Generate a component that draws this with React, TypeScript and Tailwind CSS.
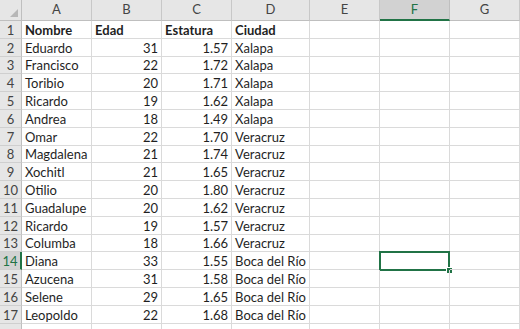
import React from 'react';

const columns = ['A', 'B', 'C', 'D', 'E', 'F', 'G'];

// [nombre, edad, estatura, ciudad]
const rows: [string, string, string, string][] = [
  ['Nombre', 'Edad', 'Estatura', 'Ciudad'],
  ['Eduardo', '31', '1.57', 'Xalapa'],
  ['Francisco', '22', '1.72', 'Xalapa'],
  ['Toribio', '20', '1.71', 'Xalapa'],
  ['Ricardo', '19', '1.62', 'Xalapa'],
  ['Andrea', '18', '1.49', 'Xalapa'],
  ['Omar', '22', '1.70', 'Veracruz'],
  ['Magdalena', '21', '1.74', 'Veracruz'],
  ['Xochitl', '21', '1.65', 'Veracruz'],
  ['Otilio', '20', '1.80', 'Veracruz'],
  ['Guadalupe', '20', '1.62', 'Veracruz'],
  ['Ricardo', '19', '1.57', 'Veracruz'],
  ['Columba', '18', '1.66', 'Veracruz'],
  ['Diana', '33', '1.55', 'Boca del Río'],
  ['Azucena', '31', '1.58', 'Boca del Río'],
  ['Selene', '29', '1.65', 'Boca del Río'],
  ['Leopoldo', '22', '1.68', 'Boca del Río'],
  ['', '', '', ''],
];

const SELECTED_COL = 5; // F
const SELECTED_ROW = 14;
const VISIBLE_ROWS = 17; // row 18 only peeks in at the bottom edge

export default function App() {
  return (
    <div
      className="w-[520px] h-[329px] overflow-hidden bg-white text-[13px] text-[#1f1f1f]"
      style={{ fontFamily: 'Lato, "Liberation Sans", sans-serif' }}
    >
      <div className="grid grid-cols-[22px_repeat(7,1fr)] grid-rows-[21px_repeat(18,17.8px)]">
        {/* Corner */}
        <div className="relative bg-[#e6e6e6] border-r border-b border-[#bfbfbf]">
          <svg className="absolute right-[3px] bottom-[3px]" width="8" height="8" viewBox="0 0 8 8">
            <polygon points="8,0 8,8 0,8" fill="#b7b7b7" />
          </svg>
        </div>

        {/* Column headers */}
        {columns.map((c, i) =>
          i === SELECTED_COL ? (
            <div
              key={c}
              className="flex items-center justify-center bg-[#d2d2d2] border-r border-[#bfbfbf] border-b-2 border-b-[#217346] text-[#217346]"
            >
              {c}
            </div>
          ) : (
            <div
              key={c}
              className="flex items-center justify-center bg-[#e6e6e6] border-r border-b border-[#c8c8c8] border-b-[#bfbfbf] text-[#444]"
            >
              {c}
            </div>
          )
        )}

        {/* Body */}
        {rows.map((r, ri) => {
          const n = ri + 1;
          const bold = ri === 0;
          const selRow = n === SELECTED_ROW;
          return (
            <React.Fragment key={n}>
              <div
                className={`flex items-end justify-center pb-[1px] leading-none border-b border-[#cfcfcf] ${
                  selRow
                    ? 'bg-[#d2d2d2] text-[#217346] border-r-2 border-r-[#217346]'
                    : 'bg-[#e6e6e6] text-[#444] border-r border-r-[#bfbfbf]'
                }`}
              >
                {n <= VISIBLE_ROWS ? n : ''}
              </div>
              {columns.map((_, ci) => {
                const value = ci < 4 ? r[ci] : '';
                const right = ci === 1 || ci === 2;
                const isSel = selRow && ci === SELECTED_COL;
                return (
                  <div
                    key={ci}
                    className={`relative flex items-end px-[3px] pb-[1px] leading-none whitespace-nowrap border-r border-b border-[#dadada] ${
                      right && !bold ? 'justify-end' : 'justify-start'
                    } ${bold ? 'font-bold' : ''}`}
                  >
                    {value}
                    {isSel && (
                      <div className="absolute -left-px -top-px -right-px -bottom-[2px] border-2 border-[#217346]">
                        <div className="absolute -right-[5px] -bottom-[5px] w-[7px] h-[7px] bg-[#217346] border border-white" />
                      </div>
                    )}
                  </div>
                );
              })}
            </React.Fragment>
          );
        })}
      </div>
    </div>
  );
}
